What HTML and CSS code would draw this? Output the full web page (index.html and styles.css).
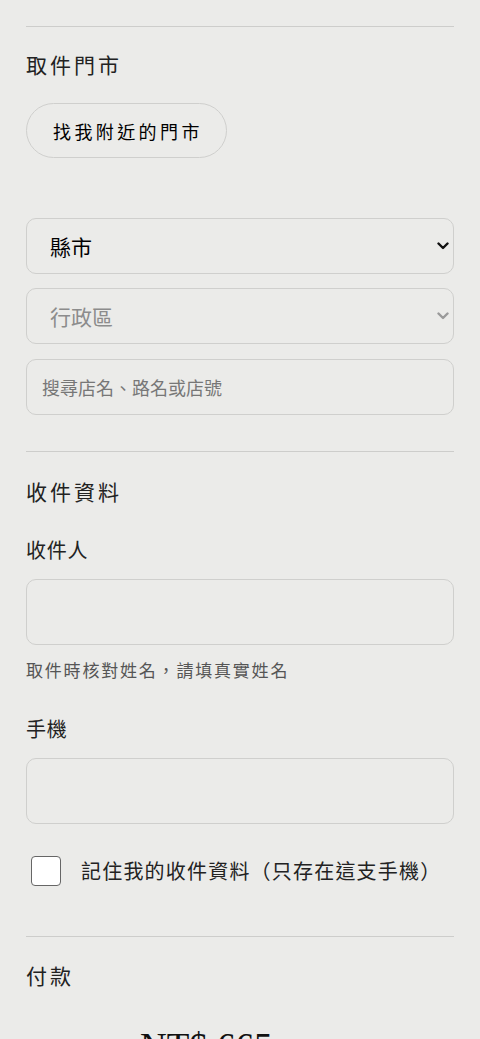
FILE: index.html
```html
<!DOCTYPE html>
<html lang="zh-Hant">
<head>
<meta charset="utf-8">
<title>取件門市</title>
<link rel="stylesheet" href="styles.css">
</head>
<body>
<main class="page">
  <section class="section section-store">
    <h2 class="section-title">取件門市</h2>
    <button class="pill-btn" type="button">找我附近的門市</button>
    <div class="store-fields">
      <div class="select select-active">
        <span class="select-text">縣市</span>
        <svg class="chevron" viewBox="0 0 12 8" width="12" height="8"><path d="M1.5 1.5 L6 6 L10.5 1.5" fill="none" stroke="currentColor" stroke-width="2.4" stroke-linecap="round" stroke-linejoin="round"/></svg>
      </div>
      <div class="select select-disabled">
        <span class="select-text">行政區</span>
        <svg class="chevron" viewBox="0 0 12 8" width="12" height="8"><path d="M1.5 1.5 L6 6 L10.5 1.5" fill="none" stroke="currentColor" stroke-width="2.4" stroke-linecap="round" stroke-linejoin="round"/></svg>
      </div>
      <input class="search-input" type="text" placeholder="搜尋店名、路名或店號">
    </div>
  </section>

  <section class="section section-info">
    <h2 class="section-title">收件資料</h2>
    <div class="field">
      <label class="field-label">收件人</label>
      <input class="text-input" type="text">
      <p class="field-hint">取件時核對姓名，請填真實姓名</p>
    </div>
    <div class="field field-phone">
      <label class="field-label">手機</label>
      <input class="text-input" type="tel">
    </div>
    <div class="remember">
      <span class="checkbox"></span>
      <span class="remember-text">記住我的收件資料（只存在這支手機）</span>
    </div>
  </section>

  <section class="section section-pay">
    <h2 class="section-title">付款</h2>
    <div class="total">NT$ 665</div>
  </section>
</main>
</body>
</html>
```

FILE: styles.css
```css
* { box-sizing: border-box; }

html, body {
  margin: 0;
  padding: 0;
  background: #ebebe9;
}

body {
  font-family: "Noto Sans CJK TC", "Noto Sans", sans-serif;
  color: #222;
}

.page {
  padding: 26px 26px 0;
}

.section {
  border-top: 1px solid #cdcdcb;
  padding-top: 23px;
}

.section-store { padding-top: 22px; padding-bottom: 36px; }
.section-info { padding-top: 24px; padding-bottom: 50px; }

.section-title {
  margin: 0;
  font-size: 21px;
  line-height: 30px;
  font-weight: 400;
  letter-spacing: 3px;
  color: #222;
}

.pill-btn {
  display: block;
  margin-top: 24px;
  height: 55px;
  padding: 0 23px 0 26px;
  border: 1px solid #cfcfcd;
  border-radius: 28px;
  background: transparent;
  font-family: "Noto Sans CJK TC", sans-serif;
  font-size: 18px;
  font-weight: 400;
  letter-spacing: 3.4px;
  color: #000;
}

.store-fields {
  margin-top: 60px;
  display: flex;
  flex-direction: column;
}

.select {
  height: 56px;
  border: 1px solid #cfcfcd;
  border-radius: 10px;
  display: flex;
  align-items: center;
  justify-content: space-between;
  padding: 0 4px 0 23px;
}

.select + .select { margin-top: 14px; }

.select-text {
  font-size: 21px;
  line-height: 28px;
}

.select-active .select-text { color: #000; font-weight: 400; }
.select-active .chevron { color: #111; }
.select-disabled .select-text { color: #8c8c8c; }
.select-disabled .chevron { color: #9a9a9a; }

.chevron { display: block; }

.search-input {
  margin-top: 15px;
  height: 56px;
  width: 100%;
  border: 1px solid #cfcfcd;
  border-radius: 10px;
  background: transparent;
  padding: 0 15px;
  font-family: "Noto Sans CJK TC", sans-serif;
  font-size: 18px;
  color: #222;
  outline: none;
}

.search-input::placeholder { color: #777; }

.field-label {
  display: block;
  margin-top: 30px;
  font-size: 20px;
  line-height: 28px;
  letter-spacing: 0.8px;
  color: #222;
}

.field-phone .field-label { margin-top: 33px; }

.text-input {
  display: block;
  margin-top: 15px;
  width: 100%;
  height: 66px;
  border: 1px solid #cfcfcd;
  border-radius: 10px;
  background: transparent;
  outline: none;
}

.field-hint {
  margin: 13px 0 0;
  font-size: 17px;
  line-height: 24px;
  letter-spacing: 1.8px;
  color: #555;
}

.remember {
  margin-top: 32px;
  display: flex;
  align-items: center;
  padding-left: 5px;
  gap: 20px;
}

.checkbox {
  width: 30px;
  height: 30px;
  border: 1.5px solid #666;
  border-radius: 4px;
  background: #fff;
  flex: none;
}

.remember-text {
  font-size: 20px;
  line-height: 28px;
  letter-spacing: 1.2px;
  color: #222;
}

.total {
  margin-top: 35px;
  padding-left: 114px;
  font-family: "Liberation Serif", serif;
  font-size: 37px;
  line-height: 43px;
  color: #111;
}
```
